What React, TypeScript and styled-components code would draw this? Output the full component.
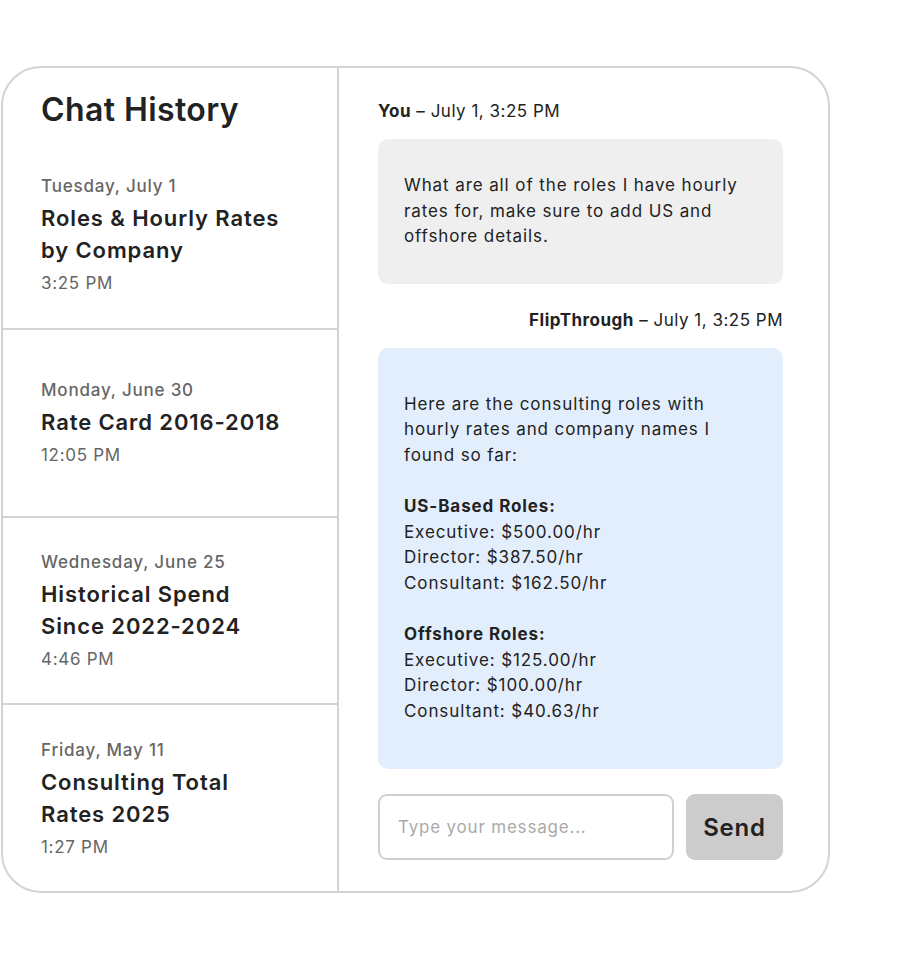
import styled, { createGlobalStyle } from 'styled-components';

const GlobalStyle = createGlobalStyle`
  html, body {
    margin: 0;
    padding: 0;
    background: #ffffff;
  }
  body {
    font-family: Inter, "Noto Sans", sans-serif;
    color: #222222;
  }
  * {
    box-sizing: border-box;
  }
`;

const Page = styled.div`
  padding: 66px 0 0 1px;
  width: 924px;
  height: 960px;
`;

const Card = styled.div`
  display: flex;
  width: 829px;
  height: 827px;
  border: 2px solid #d3d3d3;
  border-radius: 40px;
  overflow: hidden;
  background: #ffffff;
`;

const Sidebar = styled.aside`
  display: flex;
  flex-direction: column;
  width: 336px;
  flex-shrink: 0;
  border-right: 2px solid #d3d3d3;
`;

const SidebarTitle = styled.h1`
  margin: 0;
  padding: 22px 0 12px 38px;
  font-size: 32px;
  line-height: 40px;
  font-weight: 600;
  color: #222222;
  letter-spacing: 0.4px;
`;

const HistoryList = styled.div`
  display: flex;
  flex-direction: column;
  flex: 1;
`;

const HistoryItem = styled.div`
  flex: 1;
  display: flex;
  flex-direction: column;
  justify-content: center;
  padding-left: 38px;
  & + & {
    border-top: 2px solid #d3d3d3;
  }
`;

const ItemDate = styled.div`
  font-size: 17px;
  line-height: 24px;
  font-weight: 500;
  letter-spacing: 0.8px;
  color: #666666;
`;

const ItemTitle = styled.div`
  margin: 4px 0 5px;
  font-size: 22px;
  line-height: 32px;
  font-weight: 600;
  letter-spacing: 0.9px;
  color: #222222;
  white-space: pre-line;
`;

const ItemTime = styled.div`
  font-size: 17px;
  line-height: 24px;
  font-weight: 400;
  letter-spacing: 0.7px;
  color: #666666;
`;

const ChatPane = styled.section`
  flex: 1;
  min-width: 0;
  display: flex;
  flex-direction: column;
  padding: 31px 45px 31px 39px;
`;

const Meta = styled.div<{ $align?: 'left' | 'right' }>`
  margin-bottom: 16px;
  font-size: 17px;
  line-height: 24px;
  letter-spacing: 0.5px;
  color: #222222;
  text-align: ${(p) => p.$align ?? 'left'};
  b {
    font-weight: 700;
  }
`;

const Bubble = styled.div<{ $tone: 'user' | 'bot'; $padY: number }>`
  margin-bottom: 24px;
  padding: ${(p) => p.$padY}px 26px;
  border-radius: 10px;
  background: ${(p) => (p.$tone === 'user' ? '#efefef' : '#e3eefd')};
  font-size: 17px;
  line-height: 25.6px;
  letter-spacing: 0.9px;
  color: #222222;
  white-space: pre-line;
  b {
    font-weight: 700;
  }
`;

const Composer = styled.div`
  display: flex;
  gap: 12px;
  height: 66px;
  margin-top: auto;
`;

const MessageInput = styled.input`
  flex: 1;
  width: 0;
  height: 66px;
  padding: 0 18px;
  border: 2px solid #d0d0d0;
  border-radius: 9px;
  font-family: inherit;
  font-size: 17px;
  letter-spacing: 0.8px;
  color: #222222;
  outline: none;
  &::placeholder {
    color: #aaaaaa;
  }
`;

const SendButton = styled.button`
  width: 97px;
  height: 66px;
  border: none;
  border-radius: 9px;
  background: #cccccc;
  font-family: inherit;
  font-size: 24px;
  font-weight: 600;
  letter-spacing: 0.8px;
  color: #222222;
`;

const history = [
  { date: 'Tuesday, July 1', title: 'Roles & Hourly Rates\nby Company', time: '3:25 PM' },
  { date: 'Monday, June 30', title: 'Rate Card 2016-2018', time: '12:05 PM' },
  { date: 'Wednesday, June 25', title: 'Historical Spend\nSince 2022-2024', time: '4:46 PM' },
  { date: 'Friday, May 11', title: 'Consulting Total\nRates 2025', time: '1:27 PM' },
];

export default function App() {
  return (
    <Page>
      <GlobalStyle />
      <Card>
        <Sidebar>
          <SidebarTitle>Chat History</SidebarTitle>
          <HistoryList>
            {history.map((h) => (
              <HistoryItem key={h.title}>
                <ItemDate>{h.date}</ItemDate>
                <ItemTitle>{h.title}</ItemTitle>
                <ItemTime>{h.time}</ItemTime>
              </HistoryItem>
            ))}
          </HistoryList>
        </Sidebar>
        <ChatPane>
          <Meta>
            <b>You</b> – July 1, 3:25 PM
          </Meta>
          <Bubble $tone="user" $padY={34}>
            {'What are all of the roles I have hourly\nrates for, make sure to add US and\noffshore details.'}
          </Bubble>
          <Meta $align="right">
            <b>FlipThrough</b> – July 1, 3:25 PM
          </Meta>
          <Bubble $tone="bot" $padY={44}>
            {'Here are the consulting roles with\nhourly rates and company names I\nfound so far:\n\n'}
            <b>US-Based Roles:</b>
            {'\nExecutive: $500.00/hr\nDirector: $387.50/hr\nConsultant: $162.50/hr\n\n'}
            <b>Offshore Roles:</b>
            {'\nExecutive: $125.00/hr\nDirector: $100.00/hr\nConsultant: $40.63/hr'}
          </Bubble>
          <Composer>
            <MessageInput placeholder="Type your message..." />
            <SendButton>Send</SendButton>
          </Composer>
        </ChatPane>
      </Card>
    </Page>
  );
}
